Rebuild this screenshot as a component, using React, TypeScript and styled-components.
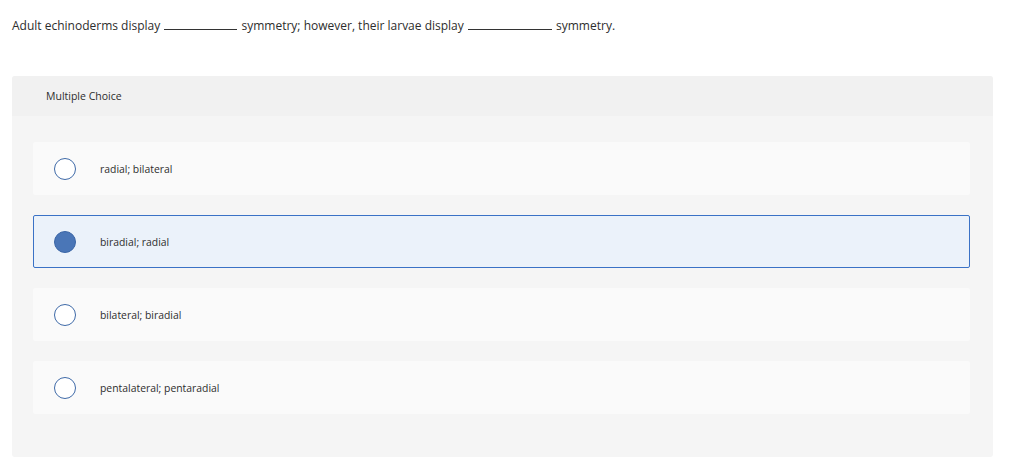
import styled, { createGlobalStyle } from "styled-components";

const GlobalStyle = createGlobalStyle`
  body {
    margin: 0;
    background: #ffffff;
    font-family: "Open Sans", Lato, Arial, sans-serif;
    color: #333333;
  }
`;

const Page = styled.div`
  padding: 17px 31px 8px 12px;
`;

const Question = styled.p`
  margin: 0;
  font-size: 12px;
  line-height: 17px;
  color: #2d2d2d;
`;

const Blank = styled.span<{ w: number }>`
  display: inline-block;
  width: ${(p) => p.w}px;
  margin: 0 1px;
  border-bottom: 1px solid #333333;
  vertical-align: baseline;
`;

const Panel = styled.section`
  margin-top: 42px;
  background: #f5f5f5;
  border-radius: 3px;
  overflow: hidden;
`;

const PanelHeader = styled.header`
  height: 40px;
  display: flex;
  align-items: center;
  padding-left: 34px;
  background: #f1f1f1;
  font-size: 10.5px;
  color: #2d2d2d;
`;

const Options = styled.div`
  display: flex;
  flex-direction: column;
  gap: 20px;
  padding: 26px 23px 43px 21px;
`;

const Option = styled.label<{ selected?: boolean }>`
  display: flex;
  align-items: center;
  gap: 24px;
  height: 53px;
  box-sizing: border-box;
  padding-left: 20px;
  border-radius: 2px;
  border: 1px solid ${(p) => (p.selected ? "#3a72c6" : "transparent")};
  background: ${(p) => (p.selected ? "#ebf2fa" : "#fafafa")};
  cursor: pointer;
`;

const Radio = styled.span<{ checked?: boolean }>`
  width: 22px;
  height: 22px;
  box-sizing: border-box;
  border-radius: 50%;
  border: 1px solid ${(p) => (p.checked ? "#3b66a6" : "#3f6aa8")};
  background: ${(p) => (p.checked ? "#4a76b7" : "#ffffff")};
  flex-shrink: 0;
`;

const OptionText = styled.span`
  font-size: 10.4px;
  color: #2d2d2d;
`;

const choices = [
  "radial; bilateral",
  "biradial; radial",
  "bilateral; biradial",
  "pentalateral; pentaradial",
];

export default function App() {
  const selected = 1;
  return (
    <>
      <GlobalStyle />
      <Page>
        <Question>
          Adult echinoderms display <Blank w={73} /> symmetry; however, their
          larvae display <Blank w={84} /> symmetry.
        </Question>
        <Panel>
          <PanelHeader>Multiple Choice</PanelHeader>
          <Options>
            {choices.map((c, i) => (
              <Option key={c} selected={i === selected}>
                <Radio checked={i === selected} />
                <OptionText>{c}</OptionText>
              </Option>
            ))}
          </Options>
        </Panel>
      </Page>
    </>
  );
}
